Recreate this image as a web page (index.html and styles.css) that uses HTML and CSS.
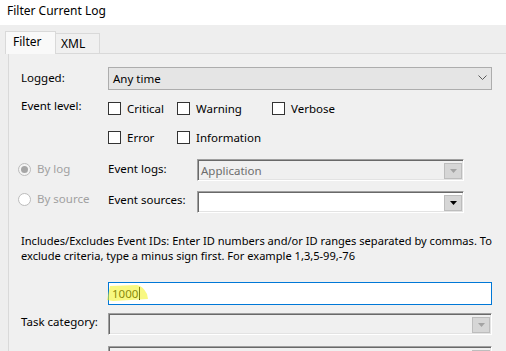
FILE: index.html
```html
<!DOCTYPE html>
<html lang="en">
<head>
  <meta charset="UTF-8">
  <title>Filter Current Log</title>
  <link rel="stylesheet" href="styles.css">
</head>
<body>
  <div class="titlebar">Filter Current Log</div>

  <div class="window">
    <div class="tabs">
      <div class="tab active">Filter</div>
      <div class="tab">XML</div>
    </div>

    <div class="panel">
      <div class="row logged">
        <div class="label">Logged:</div>
        <div class="select">
          <span>Any time</span>
          <svg class="chevron" width="9" height="5" viewBox="0 0 9 5"><path d="M0.5 0.5 L4.5 4.5 L8.5 0.5" fill="none" stroke="#5a5a5a" stroke-width="1"/></svg>
        </div>
      </div>

      <div class="row levels">
        <div class="label">Event level:</div>
        <div class="checks">
          <label class="check w69"><span class="box"></span>Critical</label>
          <label class="check w95"><span class="box"></span>Warning</label>
          <label class="check"><span class="box"></span>Verbose</label>
        </div>
      </div>
      <div class="row levels second">
        <div class="label"></div>
        <div class="checks">
          <label class="check w69"><span class="box"></span>Error</label>
          <label class="check"><span class="box"></span>Information</label>
        </div>
      </div>

      <div class="row source bylog">
        <div class="radio"><span class="dot on"></span>By log</div>
        <div class="label2">Event logs:</div>
        <div class="combo disabled">
          <span>Application</span>
          <span class="btn"><svg width="7" height="4" viewBox="0 0 7 4"><polygon points="0,0 7,0 3.5,4" fill="#a3a3a3"/></svg></span>
        </div>
      </div>
      <div class="row source bysource">
        <div class="radio"><span class="dot"></span>By source</div>
        <div class="label2">Event sources:</div>
        <div class="combo white">
          <span></span>
          <span class="btn"><svg width="7" height="4" viewBox="0 0 7 4"><polygon points="0,0 7,0 3.5,4" fill="#000"/></svg></span>
        </div>
      </div>

      <p class="hint">Includes/Excludes Event IDs: Enter ID numbers and/or ID ranges separated by commas. To<br>exclude criteria, type a minus sign first. For example 1,3,5-99,-76</p>

      <div class="row ids">
        <div class="label"></div>
        <div class="idbox">
          <span class="idtext">1000</span><span class="caret"></span>
          <svg class="marker" width="44" height="18" viewBox="0 0 44 18"><path d="M3 1 L30 0 Q36 1 40 9 L41 14 L6 16 L0 15 Z" fill="#f2f21a" opacity="0.55"/></svg>
        </div>
      </div>

      <div class="row task">
        <div class="label">Task category:</div>
        <div class="combo disabled wide">
          <span></span>
          <span class="btn"><svg width="7" height="4" viewBox="0 0 7 4"><polygon points="0,0 7,0 3.5,4" fill="#a3a3a3"/></svg></span>
        </div>
      </div>

      <div class="row keywords">
        <div class="label">Keywords:</div>
        <div class="combo disabled wide">
          <span></span>
          <span class="btn"></span>
        </div>
      </div>
    </div>
  </div>
</body>
</html>
```

FILE: styles.css
```css
body { margin: 0; background: #eeeeee; font-family: 'Noto Sans', 'Open Sans', sans-serif; font-size: 11.5px; color: #000; overflow: hidden; }
.titlebar { background: #fff; height: 25px; padding-left: 7px; line-height: 21px; font-size: 12px; box-sizing: border-box; }
.window { padding-top: 6px; }
.tabs { display: flex; align-items: flex-end; height: 22px; padding-left: 5px; position: relative; z-index: 2; }
.tab { box-sizing: border-box; height: 20px; padding: 0 0 0 5px; width: 44px; border: 1px solid #d9d9d9; border-bottom: none; border-left: none; background: #f0f0f0; line-height: 20px; font-size: 12px; }
.tab.active { width: 51px; height: 23px; margin-bottom: -1px; border-left: 1px solid #d9d9d9; padding-left: 7px; background: #f9f9f9; line-height: 19px; }
.panel { margin-left: 8px; border-top: 1px solid #d9d9d9; border-left: 1px solid #d9d9d9; background: #f0f0f0; padding: 13px 0 0 12px; height: 300px; }
.row { display: flex; align-items: flex-start; }
.label { width: 87px; flex: none; }
.logged .label { padding-top: 3px; }
.select { box-sizing: border-box; width: 384px; height: 23px; border: 1px solid #adadad; background: #e5e5e5; display: flex; align-items: center; justify-content: space-between; padding: 0 4px 1px 4px; }
.chevron { margin-bottom: 1px; }
.levels { margin-top: 9px; height: 18px; }
.levels .label { line-height: 14px; }
.levels.second { margin-top: 11px; }
.checks { display: flex; }
.check { display: flex; align-items: center; height: 18px; }
.w69 { width: 69px; }
.w95 { width: 95px; }
.box { width: 11px; height: 11px; border: 1px solid #333; background: #fff; margin-right: 6px; }
.source { height: 22px; }
.source .radio, .source .label2 { line-height: 16px; }
.bylog { margin-top: 13px; }
.bylog .radio { padding-top: 2px; }
.bylog .label2 { padding-top: 2px; }
.bysource { margin-top: 10px; }
.bysource .radio { padding-top: 0; }
.bysource .label2 { padding-top: 1px; }
.radio { width: 90px; margin-left: -3px; display: flex; align-items: center; color: #a0a0a0; }
.dot { box-sizing: border-box; width: 13px; height: 13px; border: 1px solid #bcbcbc; border-radius: 50%; background: #fff; margin-right: 6px; position: relative; }
.dot.on { background: #f4f4f4; }
.dot.on::after { content: ''; position: absolute; left: 2px; top: 2px; width: 7px; height: 7px; border-radius: 50%; background: #a6a6a6; }
.label2 { width: 89px; flex: none; }
.combo { box-sizing: border-box; width: 267px; height: 22px; border-top: 1px solid #a0a0a0; border-left: 1px solid #a0a0a0; border-right: 1px solid #fff; border-bottom: 1px solid #fff; box-shadow: inset 1px 1px 0 #696969, inset -1px -1px 0 #e3e3e3; display: flex; align-items: center; justify-content: space-between; padding: 0 1px 0 3px; }
.combo.disabled { background: #f0f0f0; color: #6d6d6d; }
.combo.white { background: #fff; }
.combo.wide { width: 384px; }
.btn { box-sizing: border-box; width: 18px; height: 16px; margin-top: 1px; border: 1px solid #bdbdbd; background: #d6d6d6; display: flex; align-items: center; justify-content: center; }
.hint { margin: 20px 0 0 0; line-height: 15px; font-size: 11.1px; white-space: nowrap; }
.ids { margin-top: 19px; }
.idbox { box-sizing: border-box; width: 384px; height: 23px; border: 1px solid #0078d7; background: #fff; display: flex; align-items: center; padding-left: 3px; position: relative; }
.idtext { position: relative; }
.caret { width: 1px; height: 13px; background: #000; margin-left: 1px; }
.marker { position: absolute; left: -2px; top: 2px; }
.task { margin-top: 8px; }
.task .label { line-height: 18px; }
.keywords { margin-top: 11px; }
.keywords .label { padding-top: 2px; }
```
